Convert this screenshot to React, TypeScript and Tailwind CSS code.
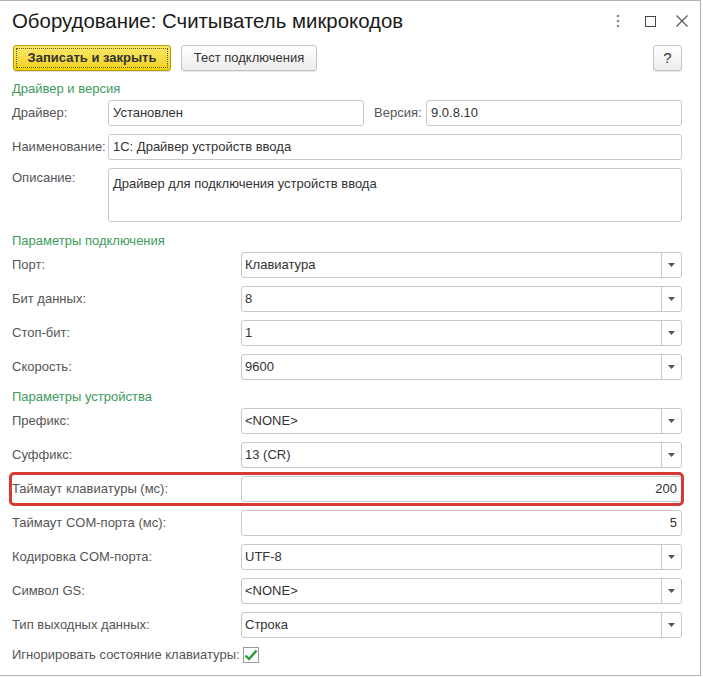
const font = "font-['Liberation_Sans',Arial,sans-serif]";

function Input({ value, className = "", right = false }: { value: string; className?: string; right?: boolean }) {
    return (
        <div
            className={`h-[26px] border border-[#c8c8c8] rounded-[3px] bg-white flex items-center px-[4px] text-[13px] text-[#333] ${right ? "justify-end" : ""} ${className}`}
        >
            {value}
        </div>
    );
}

function Select({ value }: { value: string }) {
    return (
        <div className="h-[26px] flex-1 border border-[#c8c8c8] rounded-[3px] bg-white flex text-[13px] text-[#333]">
            <div className="flex-1 flex items-center px-[3px]">{value}</div>
            <div className="w-[20px] border-l border-[#c8c8c8] flex items-center justify-center">
                <svg width="7" height="4" viewBox="0 0 7 4">
                    <path d="M0 0h7L3.5 4z" fill="#555" />
                </svg>
            </div>
        </div>
    );
}

function Heading({ text, className = "" }: { text: string; className?: string }) {
    return <div className={`h-[16px] leading-[16px] text-[13px] text-[#3e9a5c] ${className}`}>{text}</div>;
}

function Row({ label, children, className = "" }: { label: string; children: React.ReactNode; className?: string }) {
    return (
        <div className={`flex items-center h-[26px] ${className}`}>
            <div className="w-[229px] text-[13px] text-[#555]">{label}</div>
            <div className="flex-1 flex">{children}</div>
        </div>
    );
}

export default function App() {
    return (
        <div className={`w-[703px] h-[677px] bg-white ${font}`}>
            <div className="w-[701px] h-[676px] border-t border-r border-b border-[#b4b4b4] pl-[12px] pr-[18px]">
                <div className="h-[40px] flex items-center">
                    <h1 className="text-[20.4px] text-[#1a1a1a] flex-1">Оборудование: Считыватель микрокодов</h1>
                    <div className="flex items-center mr-[-6px]">
                        <svg width="4" height="14" viewBox="0 0 4 14">
                            <circle cx="2" cy="2" r="1.3" fill="#888" />
                            <circle cx="2" cy="7" r="1.3" fill="#888" />
                            <circle cx="2" cy="12" r="1.3" fill="#888" />
                        </svg>
                        <svg width="11" height="11" viewBox="0 0 11 11" className="ml-[25px]">
                            <rect x="0.5" y="0.5" width="10" height="10" fill="none" stroke="#444" />
                        </svg>
                        <svg width="12" height="12" viewBox="0 0 12 12" className="ml-[20px]">
                            <path d="M0.5 0.5l11 11M11.5 0.5l-11 11" stroke="#555" strokeWidth="1.1" />
                        </svg>
                    </div>
                </div>

                <div className="mt-[4px] flex items-center h-[26px]">
                    <button className="ml-[1px] w-[158px] h-[26px] rounded-[3px] border border-[#b59e00] bg-gradient-to-b from-[#fbe86a] to-[#f1d100] p-[2px] shadow-[0_1px_1px_rgba(0,0,0,0.15)]">
                        <span className="flex h-full items-center justify-center border border-dotted border-[#6b5a00] text-[13px] font-bold text-[#333]">
                            Записать и закрыть
                        </span>
                    </button>
                    <button className="ml-[10px] w-[136px] h-[26px] rounded-[3px] border border-[#c4c4c4] bg-gradient-to-b from-white to-[#ececec] text-[13px] text-[#333] shadow-[0_1px_1px_rgba(0,0,0,0.1)]">
                        Тест подключения
                    </button>
                    <div className="flex-1" />
                    <button className="w-[29px] h-[26px] rounded-[3px] border border-[#c4c4c4] bg-gradient-to-b from-white to-[#ececec] text-[15px] text-[#333] shadow-[0_1px_1px_rgba(0,0,0,0.1)]">
                        ?
                    </button>
                </div>

                <Heading text="Драйвер и версия" className="mt-[10px]" />

                <div className="mt-[3px] flex items-center h-[26px]">
                    <div className="w-[96px] text-[13px] text-[#555]">Драйвер:</div>
                    <Input value="Установлен" className="w-[256px]" />
                    <div className="ml-[10px] w-[52px] text-[13px] text-[#555]">Версия:</div>
                    <Input value="9.0.8.10" className="flex-1" />
                </div>

                <div className="mt-[8px] flex items-center h-[26px]">
                    <div className="w-[96px] text-[13px] text-[#555]">Наименование:</div>
                    <Input value="1С: Драйвер устройств ввода" className="flex-1" />
                </div>

                <div className="mt-[8px] flex">
                    <div className="w-[96px] text-[13px] text-[#555]">Описание:</div>
                    <div className="flex-1 h-[54px] border border-[#c8c8c8] rounded-[3px] px-[4px] pt-[5px] text-[13px] text-[#333]">
                        Драйвер для подключения устройств ввода
                    </div>
                </div>

                <Heading text="Параметры подключения" className="mt-[11px]" />
                <Row label="Порт:" className="mt-[3px]"><Select value="Клавиатура" /></Row>
                <Row label="Бит данных:" className="mt-[8px]"><Select value="8" /></Row>
                <Row label="Стоп-бит:" className="mt-[8px]"><Select value="1" /></Row>
                <Row label="Скорость:" className="mt-[8px]"><Select value="9600" /></Row>

                <Heading text="Параметры устройства" className="mt-[9px]" />
                <Row label="Префикс:" className="mt-[3px]"><Select value="<NONE>" /></Row>
                <Row label="Суффикс:" className="mt-[8px]"><Select value="13 (CR)" /></Row>
                <div className="relative mt-[8px]">
                    <Row label="Таймаут клавиатуры (мс):">
                        <Input value="200" right className="flex-1" />
                    </Row>
                    <span className="absolute left-[-3px] right-[-2px] top-[-4px] bottom-[-4px] border-[3px] border-[#d63b33] rounded-[5px]" />
                </div>
                <Row label="Таймаут COM-порта (мс):" className="mt-[8px]">
                    <Input value="5" right className="flex-1" />
                </Row>
                <Row label="Кодировка COM-порта:" className="mt-[8px]"><Select value="UTF-8" /></Row>
                <Row label="Символ GS:" className="mt-[8px]"><Select value="<NONE>" /></Row>
                <Row label="Тип выходных данных:" className="mt-[8px]"><Select value="Строка" /></Row>

                <div className="mt-[8px] flex items-center h-[18px]">
                    <span className="text-[13px] text-[#555]">Игнорировать состояние клавиатуры:</span>
                    <span className="ml-[3px] w-[16px] h-[16px] border border-[#9a9a9a] bg-white flex items-center justify-center">
                        <svg width="14" height="12" viewBox="0 0 14 12">
                            <path d="M1.5 6.5l3.5 3.5 7.5-8.5" fill="none" stroke="#2f9a3c" strokeWidth="2.4" />
                        </svg>
                    </span>
                </div>
            </div>
        </div>
    );
}
